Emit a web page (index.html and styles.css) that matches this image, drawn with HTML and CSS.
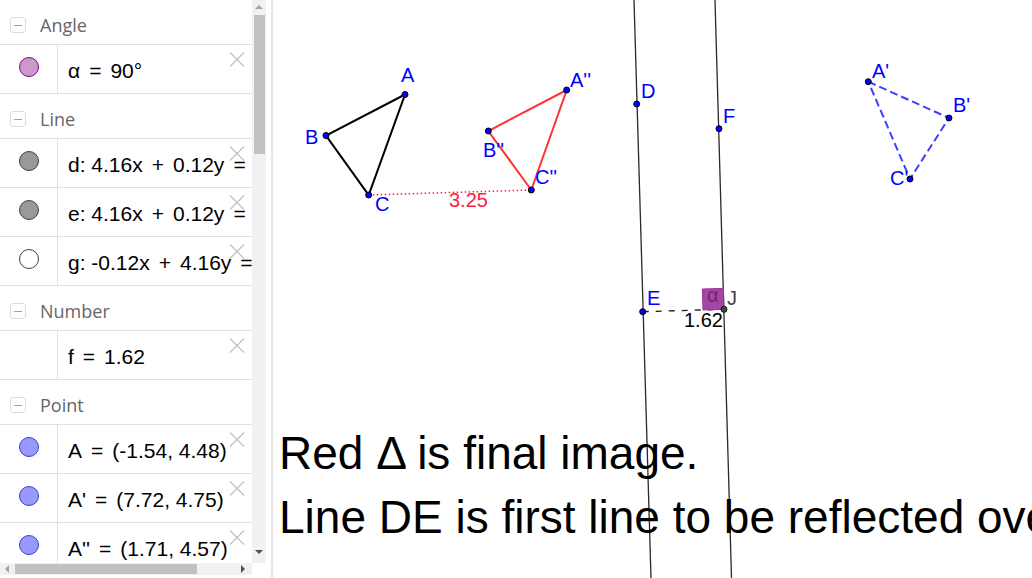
FILE: index.html
```html
<!DOCTYPE html>
<html lang="en">
<head>
<meta charset="utf-8">
<title>GeoGebra</title>
<link rel="stylesheet" href="styles.css">
</head>
<body>
<div class="app">
  <aside class="algebra">
    <div class="list">
      <div class="group-head"><span class="collapse"></span><span class="group-name">Angle</span></div>
      <div class="item">
        <div class="swatch"><span class="dot dot-angle"></span></div>
        <div class="desc">α<span class="op">=</span>90°</div>
        <svg class="close" viewBox="0 0 16 15"><path d="M1 0.5L15 14.5M15 0.5L1 14.5"/></svg>
      </div>
      <div class="group-head"><span class="collapse"></span><span class="group-name">Line</span></div>
      <div class="item">
        <div class="swatch"><span class="dot dot-line"></span></div>
        <div class="desc">d: 4.16x<span class="op">+</span>0.12y<span class="op">=</span></div>
        <svg class="close" viewBox="0 0 16 15"><path d="M1 0.5L15 14.5M15 0.5L1 14.5"/></svg>
      </div>
      <div class="item">
        <div class="swatch"><span class="dot dot-line"></span></div>
        <div class="desc">e: 4.16x<span class="op">+</span>0.12y<span class="op">=</span></div>
        <svg class="close" viewBox="0 0 16 15"><path d="M1 0.5L15 14.5M15 0.5L1 14.5"/></svg>
      </div>
      <div class="item">
        <div class="swatch"><span class="dot dot-empty"></span></div>
        <div class="desc">g: -0.12x<span class="op">+</span>4.16y<span class="op">=</span></div>
        <svg class="close" viewBox="0 0 16 15"><path d="M1 0.5L15 14.5M15 0.5L1 14.5"/></svg>
      </div>
      <div class="group-head"><span class="collapse"></span><span class="group-name">Number</span></div>
      <div class="item">
        <div class="swatch"></div>
        <div class="desc">f<span class="op">=</span>1.62</div>
        <svg class="close" viewBox="0 0 16 15"><path d="M1 0.5L15 14.5M15 0.5L1 14.5"/></svg>
      </div>
      <div class="group-head"><span class="collapse"></span><span class="group-name">Point</span></div>
      <div class="item">
        <div class="swatch"><span class="dot dot-point"></span></div>
        <div class="desc">A<span class="op">=</span>(-1.54, 4.48)</div>
        <svg class="close" viewBox="0 0 16 15"><path d="M1 0.5L15 14.5M15 0.5L1 14.5"/></svg>
      </div>
      <div class="item">
        <div class="swatch"><span class="dot dot-point"></span></div>
        <div class="desc">A'<span class="op">=</span>(7.72, 4.75)</div>
        <svg class="close" viewBox="0 0 16 15"><path d="M1 0.5L15 14.5M15 0.5L1 14.5"/></svg>
      </div>
      <div class="item">
        <div class="swatch"><span class="dot dot-point"></span></div>
        <div class="desc">A''<span class="op">=</span>(1.71, 4.57)</div>
        <svg class="close" viewBox="0 0 16 15"><path d="M1 0.5L15 14.5M15 0.5L1 14.5"/></svg>
      </div>
    </div>
    <div class="vscroll">
      <span class="arrow-up"></span>
      <span class="vthumb"></span>
      <span class="spacer"></span>
      <span class="arrow-down"></span>
    </div>
    <div class="hscroll">
      <span class="arrow-left"></span>
      <span class="hthumb"></span>
      <span class="spacer"></span>
      <span class="arrow-right"></span>
    </div>
  </aside>
  <div class="splitter"></div>
  <main class="graphics">
    <svg class="plot" width="759" height="578" viewBox="273 0 759 578">
      <line class="ln" x1="634" y1="0" x2="651" y2="578"/>
      <line class="ln" x1="715" y1="0" x2="731.5" y2="578"/>
      <polygon class="tri-black" points="405,94.5 326,135.5 368.7,195"/>
      <polygon class="tri-red" points="566.7,90 488.3,131 531.3,190"/>
      <polygon class="tri-blue" points="868.3,81.7 949,118 910,179"/>
      <line class="dot-red" x1="368.7" y1="195" x2="531.3" y2="190"/>
      <line class="dash-black" x1="642.7" y1="311.7" x2="724" y2="309.3"/>
      <polygon class="angle" points="724,309.4 723.4,288.4 702.4,289 703,310"/>
      <text class="lbl-angle" x="707" y="302">α</text>

      <g class="pts">
        <circle cx="405" cy="94.5" r="3"/>
        <circle cx="326" cy="135.5" r="3"/>
        <circle cx="368.7" cy="195" r="3"/>
        <circle cx="566.7" cy="90" r="3"/>
        <circle cx="488.3" cy="131" r="3"/>
        <circle cx="531.3" cy="190" r="3"/>
        <circle cx="868.3" cy="81.7" r="3"/>
        <circle cx="949" cy="118" r="3"/>
        <circle cx="910" cy="179" r="3"/>
        <circle cx="636.7" cy="104" r="3"/>
        <circle cx="719" cy="128.7" r="3"/>
        <circle cx="642.7" cy="311.7" r="3"/>
      </g>
      <circle class="pt-j" cx="724" cy="309.3" r="3"/>

      <g class="lbl">
        <text x="401" y="82">A</text>
        <text x="305" y="144">B</text>
        <text x="375" y="211">C</text>
        <text x="570" y="87">A''</text>
        <text x="483" y="157">B''</text>
        <text x="535" y="184">C''</text>
        <text x="872" y="78">A'</text>
        <text x="953" y="111.5">B'</text>
        <text x="890" y="185">C'</text>
        <text x="641" y="98">D</text>
        <text x="723" y="122.5">F</text>
        <text x="647" y="305">E</text>
      </g>
      <text class="lbl-j" x="727" y="305">J</text>
      <text class="lbl-red" x="449" y="207">3.25</text>
      <text class="lbl-num" x="684" y="327">1.62</text>

      <text class="big" x="279" y="469">Red Δ is final image.</text>
      <text class="big" x="279" y="533">Line DE is first line to be reflected over.</text>
    </svg>
  </main>
</div>
</body>
</html>
```

FILE: styles.css
```css
html, body {
  margin: 0;
  padding: 0;
  background: #fff;
}

body {
  font-family: "Liberation Sans", Arial, sans-serif;
  color: #000;
}

.app {
  display: flex;
  width: 1032px;
  height: 578px;
  overflow: hidden;
}

/* ---------- algebra view ---------- */
.algebra {
  flex: 0 0 266px;
  display: grid;
  grid-template-columns: 252px 14px;
  grid-template-rows: 563px 12px 3px;
  background: #fff;
}

.list {
  grid-column: 1;
  grid-row: 1;
  overflow: hidden;
}

.group-head {
  height: 45px;
  box-sizing: border-box;
  border-bottom: 1px solid #e0e0e0;
  display: flex;
  align-items: center;
  padding: 6px 0 0 10px;
}

.collapse {
  width: 14px;
  height: 14px;
  border: 1px solid #dcdcdc;
  border-radius: 3px;
  display: flex;
  align-items: center;
  justify-content: center;
}

.collapse::before {
  content: "";
  display: block;
  width: 8px;
  height: 1px;
  background: #a0a0a0;
}

.group-name {
  margin-left: 14px;
  font-family: "Open Sans", "Noto Sans", sans-serif;
  font-size: 18px;
  color: #666;
}

.item {
  position: relative;
  display: flex;
  height: 49px;
  box-sizing: border-box;
  border-bottom: 1px solid #e0e0e0;
}

.swatch {
  flex: 0 0 57px;
  border-right: 1px solid #e0e0e0;
  display: flex;
  justify-content: center;
  align-items: flex-start;
}

.dot {
  width: 18px;
  height: 18px;
  border-radius: 50%;
  border: 1px solid #444;
  margin-top: 12px;
}

.dot-angle { background: #cc99cc; border-color: #800080; }
.dot-line  { background: #999999; border-color: #404040; }
.dot-empty { background: #ffffff; border-color: #404040; }
.dot-point { background: #9999ff; border-color: #3c3cc8; }

.desc {
  flex: 1;
  min-width: 0;
  padding: 14px 0 0 10px;
  font-size: 21px;
  line-height: 24px;
  white-space: nowrap;
  overflow: hidden;
}

.op {
  margin: 0 9px;
}

.close {
  position: absolute;
  left: 229px;
  top: 7px;
  width: 16px;
  height: 15px;
  fill: none;
  stroke: #c4c4c4;
  stroke-width: 1.4;
}

/* scrollbars */
.vscroll {
  grid-column: 2;
  grid-row: 1;
  background: #f1f1f1;
  display: flex;
  flex-direction: column;
  align-items: center;
}

.arrow-up {
  width: 0;
  height: 0;
  border-left: 4px solid transparent;
  border-right: 4px solid transparent;
  border-bottom: 4px solid #a3a3a3;
  margin-top: 5px;
}

.vthumb {
  width: 11px;
  height: 139px;
  margin-top: 6px;
  background: #c1c1c1;
}

.spacer {
  flex: 1;
}

.arrow-down {
  width: 0;
  height: 0;
  border-left: 4px solid transparent;
  border-right: 4px solid transparent;
  border-top: 4px solid #505050;
  margin-bottom: 9px;
}

.hscroll {
  grid-column: 1;
  grid-row: 2;
  background: #f1f1f1;
  display: flex;
  align-items: center;
}

.arrow-left {
  width: 0;
  height: 0;
  border-top: 4px solid transparent;
  border-bottom: 4px solid transparent;
  border-right: 4px solid #a3a3a3;
  margin-left: 5px;
}

.hthumb {
  width: 182px;
  height: 10px;
  margin-left: 6px;
  background: #c1c1c1;
}

.arrow-right {
  width: 0;
  height: 0;
  border-top: 4px solid transparent;
  border-bottom: 4px solid transparent;
  border-left: 4px solid #505050;
  margin-right: 7px;
}

.splitter {
  flex: 0 0 5px;
  border-right: 2px solid #e8e8e8;
}

/* ---------- graphics view ---------- */
.graphics {
  flex: 1;
  min-width: 0;
}

.plot {
  display: block;
  font-family: "Liberation Sans", Arial, sans-serif;
}

.ln {
  stroke: #2a2a2a;
  stroke-width: 1.3;
}

.tri-black {
  fill: none;
  stroke: #000;
  stroke-width: 2;
}

.tri-red {
  fill: none;
  stroke: #ff3333;
  stroke-width: 2;
}

.tri-blue {
  fill: none;
  stroke: #3f3fff;
  stroke-width: 2;
  stroke-dasharray: 8 4;
}

.dot-red {
  stroke: #ff2040;
  stroke-width: 1.5;
  stroke-dasharray: 1.5 2.5;
}

.dash-black {
  stroke: #1a1a1a;
  stroke-width: 1.3;
  stroke-dasharray: 6 7;
}

.angle {
  fill: #a447a4;
  stroke: #993399;
  stroke-width: 1;
}

.lbl-angle {
  font-size: 20px;
  fill: #7a1f7a;
}

.pts circle {
  fill: #0000ff;
  stroke: #000;
  stroke-width: 1;
}

.pt-j {
  fill: #444;
  stroke: #111;
  stroke-width: 1;
}

.lbl text {
  font-size: 20px;
  fill: #0000ff;
}

.lbl-j {
  font-size: 20px;
  fill: #444;
}

.lbl-red {
  font-size: 20px;
  fill: #ff2040;
}

.lbl-num {
  font-size: 20px;
  fill: #000;
}

.big {
  font-size: 46px;
  fill: #000;
}
```
